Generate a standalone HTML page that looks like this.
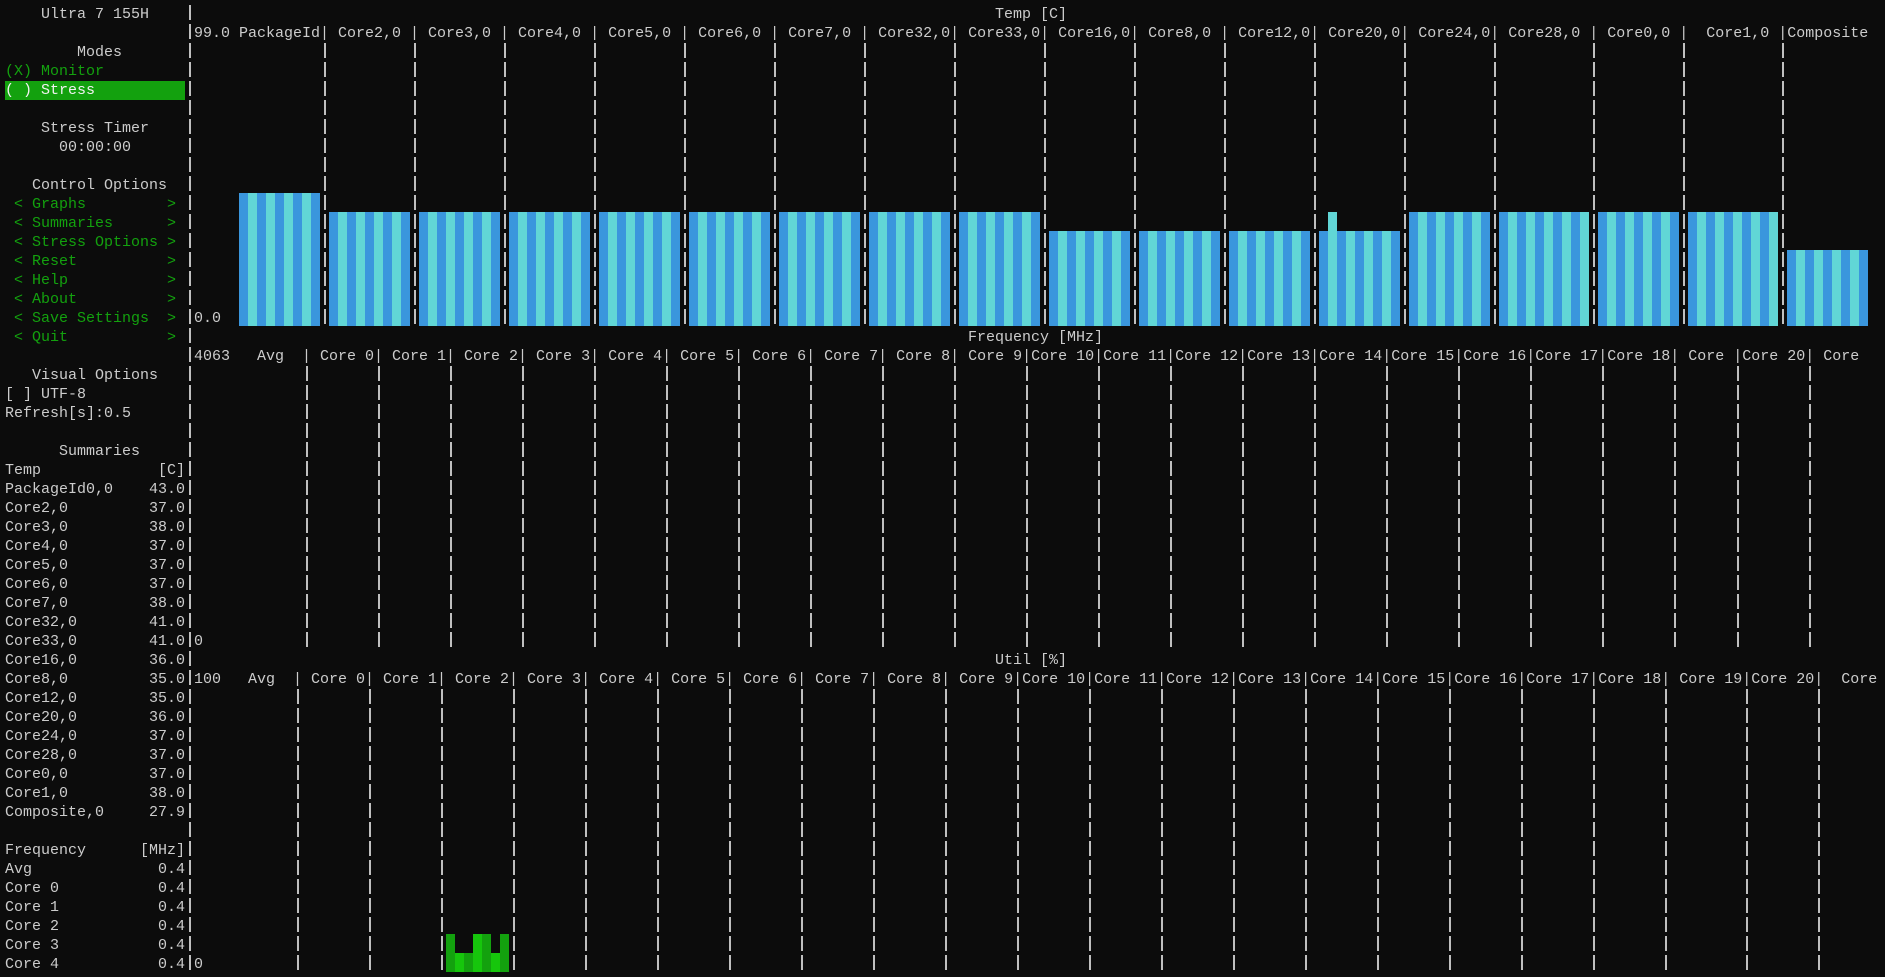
<!DOCTYPE html>
<html><head><meta charset="utf-8">
<style>
html,body{margin:0;padding:0;background:#0c0c0c;width:1885px;height:977px;overflow:hidden}
body{position:relative;font-family:"Liberation Mono","DejaVu Sans Mono",monospace;font-size:15px;line-height:19px;color:#cccccc}
.t{position:absolute;white-space:pre;margin:0;transform:translateY(2px)}
.g{color:#13a10e}
.hl{background:#13a10e;color:#f2f2f2;display:inline-block;width:180px}
.s{position:absolute;width:2px;background:repeating-linear-gradient(to bottom,transparent 0 2px,#c0c0c0 2px 17px,transparent 17px 19px)}
.b{position:absolute;background:repeating-linear-gradient(to right,#3a96dd 0 9px,#61d6d6 9px 18px)}
.gr{position:absolute}
</style></head><body>
<pre class="t" style="left:5px;top:3px;font:inherit">    Ultra 7 155H

        Modes
<span class="g">(X) Monitor</span>
<span class="hl">( ) Stress</span>

    Stress Timer
      00:00:00

   Control Options
<span class="g"> &lt; Graphs         &gt;</span>
<span class="g"> &lt; Summaries      &gt;</span>
<span class="g"> &lt; Stress Options &gt;</span>
<span class="g"> &lt; Reset          &gt;</span>
<span class="g"> &lt; Help           &gt;</span>
<span class="g"> &lt; About          &gt;</span>
<span class="g"> &lt; Save Settings  &gt;</span>
<span class="g"> &lt; Quit           &gt;</span>

   Visual Options
[ ] UTF-8
Refresh[s]:0.5

      Summaries
Temp             [C]
PackageId0,0    43.0
Core2,0         37.0
Core3,0         38.0
Core4,0         37.0
Core5,0         37.0
Core6,0         37.0
Core7,0         38.0
Core32,0        41.0
Core33,0        41.0
Core16,0        36.0
Core8,0         35.0
Core12,0        35.0
Core20,0        36.0
Core24,0        37.0
Core28,0        37.0
Core0,0         37.0
Core1,0         38.0
Composite,0     27.9

Frequency      [MHz]
Avg              0.4
Core 0           0.4
Core 1           0.4
Core 2           0.4
Core 3           0.4
Core 4           0.4</pre>

<!-- bars -->
<div class="b" style="left:239px;top:193px;width:81px;height:133px"></div>
<div class="b" style="left:329px;top:212px;width:81px;height:114px"></div>
<div class="b" style="left:419px;top:212px;width:81px;height:114px"></div>
<div class="b" style="left:509px;top:212px;width:81px;height:114px"></div>
<div class="b" style="left:599px;top:212px;width:81px;height:114px"></div>
<div class="b" style="left:689px;top:212px;width:81px;height:114px"></div>
<div class="b" style="left:779px;top:212px;width:81px;height:114px"></div>
<div class="b" style="left:869px;top:212px;width:81px;height:114px"></div>
<div class="b" style="left:959px;top:212px;width:81px;height:114px"></div>
<div class="b" style="left:1049px;top:231px;width:81px;height:95px"></div>
<div class="b" style="left:1139px;top:231px;width:81px;height:95px"></div>
<div class="b" style="left:1229px;top:231px;width:81px;height:95px"></div>
<div class="b" style="left:1319px;top:231px;width:81px;height:95px"></div>
<div class="gr" style="left:1328px;top:212px;width:9px;height:19px;background:#61d6d6"></div>
<div class="b" style="left:1409px;top:212px;width:81px;height:114px"></div>
<div class="b" style="left:1499px;top:212px;width:90px;height:114px"></div>
<div class="b" style="left:1598px;top:212px;width:81px;height:114px"></div>
<div class="b" style="left:1688px;top:212px;width:90px;height:114px"></div>
<div class="b" style="left:1787px;top:250px;width:81px;height:76px"></div>

<!-- util green -->
<div class="gr" style="left:446px;top:934px;width:9px;height:38px;background:#13a10e"></div>
<div class="gr" style="left:455px;top:953px;width:9px;height:19px;background:#16c60c"></div>
<div class="gr" style="left:464px;top:953px;width:9px;height:19px;background:#13a10e"></div>
<div class="gr" style="left:473px;top:934px;width:9px;height:38px;background:#16c60c"></div>
<div class="gr" style="left:482px;top:934px;width:9px;height:38px;background:#13a10e"></div>
<div class="gr" style="left:491px;top:953px;width:9px;height:19px;background:#16c60c"></div>
<div class="gr" style="left:500px;top:934px;width:9px;height:38px;background:#13a10e"></div>

<!-- left border -->
<div class="s" style="left:188.5px;top:3px;height:969px"></div>

<!-- temp separators -->
<div class="s" style="left:323.5px;top:41px;height:285px"></div>
<div class="s" style="left:413.5px;top:41px;height:285px"></div>
<div class="s" style="left:503.5px;top:41px;height:285px"></div>
<div class="s" style="left:593.5px;top:41px;height:285px"></div>
<div class="s" style="left:683.5px;top:41px;height:285px"></div>
<div class="s" style="left:773.5px;top:41px;height:285px"></div>
<div class="s" style="left:863.5px;top:41px;height:285px"></div>
<div class="s" style="left:953.5px;top:41px;height:285px"></div>
<div class="s" style="left:1043.5px;top:41px;height:285px"></div>
<div class="s" style="left:1133.5px;top:41px;height:285px"></div>
<div class="s" style="left:1223.5px;top:41px;height:285px"></div>
<div class="s" style="left:1313.5px;top:41px;height:285px"></div>
<div class="s" style="left:1403.5px;top:41px;height:285px"></div>
<div class="s" style="left:1493.5px;top:41px;height:285px"></div>
<div class="s" style="left:1592.5px;top:41px;height:285px"></div>
<div class="s" style="left:1682.5px;top:41px;height:285px"></div>
<div class="s" style="left:1781.5px;top:41px;height:285px"></div>

<!-- freq separators -->
<div class="s" style="left:305.5px;top:364px;height:285px"></div>
<div class="s" style="left:377.5px;top:364px;height:285px"></div>
<div class="s" style="left:449.5px;top:364px;height:285px"></div>
<div class="s" style="left:521.5px;top:364px;height:285px"></div>
<div class="s" style="left:593.5px;top:364px;height:285px"></div>
<div class="s" style="left:665.5px;top:364px;height:285px"></div>
<div class="s" style="left:737.5px;top:364px;height:285px"></div>
<div class="s" style="left:809.5px;top:364px;height:285px"></div>
<div class="s" style="left:881.5px;top:364px;height:285px"></div>
<div class="s" style="left:953.5px;top:364px;height:285px"></div>
<div class="s" style="left:1025.5px;top:364px;height:285px"></div>
<div class="s" style="left:1097.5px;top:364px;height:285px"></div>
<div class="s" style="left:1169.5px;top:364px;height:285px"></div>
<div class="s" style="left:1241.5px;top:364px;height:285px"></div>
<div class="s" style="left:1313.5px;top:364px;height:285px"></div>
<div class="s" style="left:1385.5px;top:364px;height:285px"></div>
<div class="s" style="left:1457.5px;top:364px;height:285px"></div>
<div class="s" style="left:1529.5px;top:364px;height:285px"></div>
<div class="s" style="left:1601.5px;top:364px;height:285px"></div>
<div class="s" style="left:1673.5px;top:364px;height:285px"></div>
<div class="s" style="left:1736.5px;top:364px;height:285px"></div>
<div class="s" style="left:1808.5px;top:364px;height:285px"></div>

<!-- util separators -->
<div class="s" style="left:296.5px;top:687px;height:285px"></div>
<div class="s" style="left:368.5px;top:687px;height:285px"></div>
<div class="s" style="left:440.5px;top:687px;height:285px"></div>
<div class="s" style="left:512.5px;top:687px;height:285px"></div>
<div class="s" style="left:584.5px;top:687px;height:285px"></div>
<div class="s" style="left:656.5px;top:687px;height:285px"></div>
<div class="s" style="left:728.5px;top:687px;height:285px"></div>
<div class="s" style="left:800.5px;top:687px;height:285px"></div>
<div class="s" style="left:872.5px;top:687px;height:285px"></div>
<div class="s" style="left:944.5px;top:687px;height:285px"></div>
<div class="s" style="left:1016.5px;top:687px;height:285px"></div>
<div class="s" style="left:1088.5px;top:687px;height:285px"></div>
<div class="s" style="left:1160.5px;top:687px;height:285px"></div>
<div class="s" style="left:1232.5px;top:687px;height:285px"></div>
<div class="s" style="left:1304.5px;top:687px;height:285px"></div>
<div class="s" style="left:1376.5px;top:687px;height:285px"></div>
<div class="s" style="left:1448.5px;top:687px;height:285px"></div>
<div class="s" style="left:1520.5px;top:687px;height:285px"></div>
<div class="s" style="left:1592.5px;top:687px;height:285px"></div>
<div class="s" style="left:1664.5px;top:687px;height:285px"></div>
<div class="s" style="left:1745.5px;top:687px;height:285px"></div>
<div class="s" style="left:1817.5px;top:687px;height:285px"></div>

<!-- graph text -->
<div class="t" style="left:995px;top:3px">Temp [C]</div>
<div class="t" style="left:194px;top:22px">99.0 PackageId| Core2,0 | Core3,0 | Core4,0 | Core5,0 | Core6,0 | Core7,0 | Core32,0| Core33,0| Core16,0| Core8,0 | Core12,0| Core20,0| Core24,0| Core28,0 | Core0,0 |  Core1,0 |Composite</div>
<div class="t" style="left:194px;top:307px">0.0</div>
<div class="t" style="left:968px;top:326px">Frequency [MHz]</div>
<div class="t" style="left:194px;top:345px">4063   Avg  | Core 0| Core 1| Core 2| Core 3| Core 4| Core 5| Core 6| Core 7| Core 8| Core 9|Core 10|Core 11|Core 12|Core 13|Core 14|Core 15|Core 16|Core 17|Core 18| Core |Core 20| Core</div>
<div class="t" style="left:194px;top:630px">0</div>
<div class="t" style="left:995px;top:649px">Util [%]</div>
<div class="t" style="left:194px;top:668px">100   Avg  | Core 0| Core 1| Core 2| Core 3| Core 4| Core 5| Core 6| Core 7| Core 8| Core 9|Core 10|Core 11|Core 12|Core 13|Core 14|Core 15|Core 16|Core 17|Core 18| Core 19|Core 20|  Core</div>
<div class="t" style="left:194px;top:953px">0</div>
</body></html>
